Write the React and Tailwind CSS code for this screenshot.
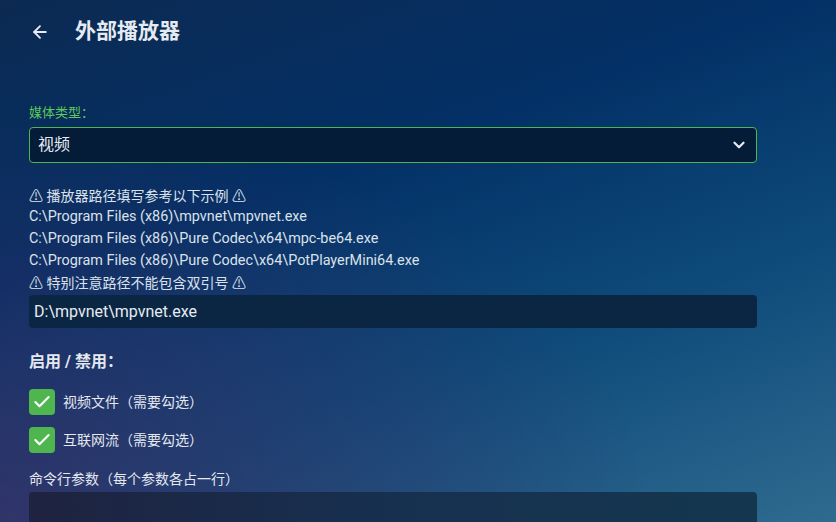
import { ArrowLeft, ChevronDown, Check } from "lucide-react"

const font = { fontFamily: '"Roboto", "Noto Sans CJK SC", sans-serif' }

const examples = [
  "C:\\Program Files (x86)\\mpvnet\\mpvnet.exe",
  "C:\\Program Files (x86)\\Pure Codec\\x64\\mpc-be64.exe",
  "C:\\Program Files (x86)\\Pure Codec\\x64\\PotPlayerMini64.exe",
]

const CheckRow = ({ label }) => (
  <div className="flex items-center gap-2 h-[26px]">
    <div className="w-[26px] h-[26px] rounded-[4px] bg-[#4fb64f] flex items-center justify-center">
      <Check size={20} strokeWidth={2.5} className="text-white" />
    </div>
    <span className="text-[14px] text-[#e3e8ef]">{label}</span>
  </div>
)

const App = () => {
  return (
    <div
      className="w-[836px] h-[522px] overflow-hidden bg-[linear-gradient(160deg,#0c2a52_0%,#033066_35%,#0d4a7a_65%,#2f6a8f_100%)] relative"
      style={font}
    >
      <div className="absolute inset-0 bg-[radial-gradient(ellipse_at_0%_100%,rgba(60,45,100,0.75)_0%,rgba(60,45,100,0)_55%)]" />
      <div className="relative pl-[29px] w-[757px]">
        <div className="flex items-center h-[64px]">
          <ArrowLeft size={20} strokeWidth={2.2} className="text-[#e6ebf2] ml-[1px]" />
          <h1 className="ml-[25px] text-[21px] font-bold text-[#e6ebf2]">外部播放器</h1>
        </div>

        <div className="mt-[39px] text-[13px] text-[#5fc85a] leading-[20px]">媒体类型：</div>
        <div className="mt-[4px] h-[36px] rounded-[4px] border border-[#4fb64f] bg-[#041c38] flex items-center justify-between pl-[8px] pr-[8px]">
          <span className="text-[16px] text-[#e6ebf2]">视频</span>
          <ChevronDown size={18} strokeWidth={3} className="text-[#e6ebf2]" />
        </div>

        <div className="mt-[23px] text-[14px] text-[#dbe2ea] leading-[22px] flex flex-col">
          <span className="leading-[20px]">⚠ 播放器路径填写参考以下示例 ⚠</span>
          {examples.map((e) => (
            <span key={e} className="text-[14.4px]">{e}</span>
          ))}
          <span>⚠ 特别注意路径不能包含双引号 ⚠</span>
        </div>
        <div className="mt-[1px] h-[33px] rounded-[4px] bg-[#0a2643] flex items-center pl-[5px]">
          <span className="text-[16px] text-[#e6ebf2]">D:\mpvnet\mpvnet.exe</span>
        </div>

        <div className="mt-[22px] text-[16px] font-bold text-[#e3e8ef] leading-[24px]">启用 / 禁用：</div>
        <div className="mt-[15px] flex flex-col gap-[12px]">
          <CheckRow label="视频文件（需要勾选）" />
          <CheckRow label="互联网流（需要勾选）" />
        </div>

        <div className="mt-[16px] text-[14px] text-[#e3e8ef] leading-[20px]">命令行参数（每个参数各占一行）</div>
        <div className="mt-[3px] h-[80px] rounded-[4px] bg-[linear-gradient(90deg,#1e2340_0%,#173050_50%,#14374f_100%)]" />
      </div>
    </div>
  )
}

export default App
